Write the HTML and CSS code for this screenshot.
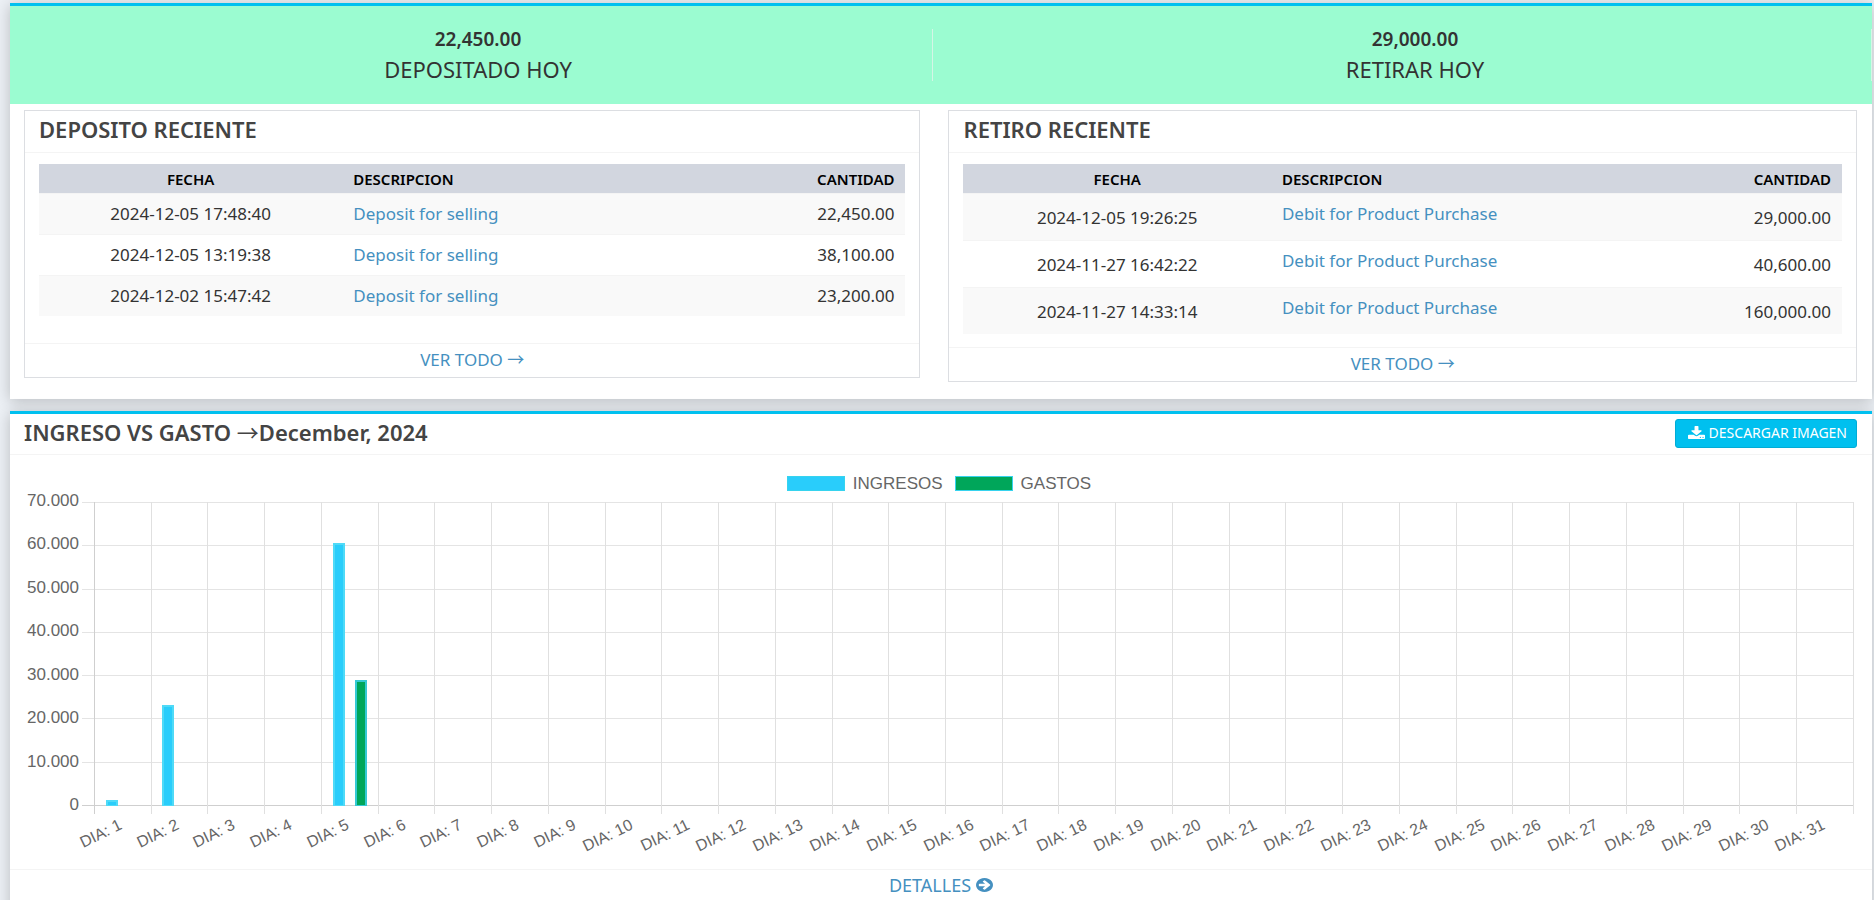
FILE: index.html
```html
<!DOCTYPE html>
<html lang="es">
<head>
<meta charset="utf-8">
<title>Panel</title>
<link rel="stylesheet" href="styles.css">
</head>
<body>
<main class="page">
  <section class="box">
    <div class="summary">
      <div class="summary-item"><strong class="summary-amount">22,450.00</strong><span class="summary-label">DEPOSITADO HOY</span></div>
      <div class="summary-item"><strong class="summary-amount">29,000.00</strong><span class="summary-label">RETIRAR HOY</span></div>
    </div>
    <div class="panels">
      <section class="panel">
        <h3 class="panel-title">DEPOSITO RECIENTE</h3>
        <div class="panel-body panel-body-tall">
          <table class="records">
            <thead><tr><th class="date">FECHA</th><th class="desc">DESCRIPCION</th><th class="amount">CANTIDAD</th></tr></thead>
            <tbody>
              <tr><td class="date">2024-12-05 17:48:40</td><td class="desc"><a href="#">Deposit for selling</a></td><td class="amount">22,450.00</td></tr>
              <tr><td class="date">2024-12-05 13:19:38</td><td class="desc"><a href="#">Deposit for selling</a></td><td class="amount">38,100.00</td></tr>
              <tr><td class="date">2024-12-02 15:47:42</td><td class="desc"><a href="#">Deposit for selling</a></td><td class="amount">23,200.00</td></tr>
            </tbody>
          </table>
        </div>
        <div class="panel-footer"><a href="#">VER TODO <span class="arrow">→</span></a></div>
      </section>
      <section class="panel">
        <h3 class="panel-title">RETIRO RECIENTE</h3>
        <div class="panel-body">
          <table class="records records-spaced">
            <thead><tr><th class="date">FECHA</th><th class="desc">DESCRIPCION</th><th class="amount">CANTIDAD</th></tr></thead>
            <tbody>
              <tr><td class="date">2024-12-05 19:26:25</td><td class="desc"><a href="#">Debit for Product Purchase</a></td><td class="amount">29,000.00</td></tr>
              <tr><td class="date">2024-11-27 16:42:22</td><td class="desc"><a href="#">Debit for Product Purchase</a></td><td class="amount">40,600.00</td></tr>
              <tr><td class="date">2024-11-27 14:33:14</td><td class="desc"><a href="#">Debit for Product Purchase</a></td><td class="amount">160,000.00</td></tr>
            </tbody>
          </table>
        </div>
        <div class="panel-footer"><a href="#">VER TODO <span class="arrow">→</span></a></div>
      </section>
    </div>
  </section>

  <section class="box">
    <header class="box-header">
      <h3 class="box-title">INGRESO VS GASTO <span class="arrow">→</span>December, 2024</h3>
      <button class="download" type="button">
        <svg class="download-icon" viewBox="0 0 1664 1536" preserveAspectRatio="none" aria-hidden="true"><path fill="currentColor" d="M1280 1216q0-26-19-45t-45-19-45 19-19 45 19 45 45 19 45-19 19-45zm256 0q0-26-19-45t-45-19-45 19-19 45 19 45 45 19 45-19 19-45zm128-224v320q0 40-28 68t-68 28H96q-40 0-68-28t-28-68V992q0-40 28-68t68-28h465l135 136q58 56 136 56t136-56l136-136h464q40 0 68 28t28 68zm-325-569q17 41-14 70l-448 448q-18 19-45 19t-45-19L339 493q-31-29-14-70 17-39 59-39h256V-64q0-26 19-45t45-19h256q26 0 45 19t19 45v448h256q42 0 59 39z" transform="translate(0 128)"/></svg>
        DESCARGAR IMAGEN
      </button>
    </header>
    <div class="chart">
      <div class="legend">
        <span class="legend-item"><i class="swatch income"></i>INGRESOS</span>
        <span class="legend-item"><i class="swatch expense"></i>GASTOS</span>
      </div>
      <div class="chart-area">
        <div class="y-axis" id="y-axis"></div>
        <div class="plot" id="plot"></div>
        <div class="x-axis" id="x-axis"></div>
      </div>
    </div>
    <footer class="box-footer"><a class="details" href="#">DETALLES
      <svg class="details-icon" viewBox="0 0 1536 1536" preserveAspectRatio="none" aria-hidden="true"><path fill="currentColor" d="M1285 768q0-27-18-45L905 361l-91-91q-18-18-45-18t-45 18l-91 91q-18 18-18 45t18 45l189 189H320q-26 0-45 19t-19 45v128q0 26 19 45t45 19h502l-189 189q-19 19-19 45t19 45l91 91q18 18 45 18t45-18l362-362 91-91q18-18 18-45zm251 0q0 209-103 385.500T1153.500 1433 768 1536t-385.500-103T103 1153.500 0 768t103-385.500T382.500 103 768 0t385.500 103T1433 382.500 1536 768z"/></svg></a></footer>
  </section>
</main>
<script src="chart.js"></script>
</body>
</html>
```
FILE: styles.css
```css
* { box-sizing: border-box; }
body {
  margin: 0;
  background: #ecf0f5;
  color: #333;
  font: 17px/20px "Noto Sans", sans-serif;
  overflow: hidden;
}
a { color: #4590c0; text-decoration: none; }
.page {
  display: flex;
  flex-direction: column;
  gap: 12px;
  padding: 3px 2px 0 10px;
}
.box {
  background: #fff;
  border-top: 3px solid #00c0ef;
  box-shadow: 0 2px 14px rgba(0, 0, 0, .22);
}
.summary {
  display: grid;
  grid-template-columns: 923fr 939fr;
  padding: 23px 0;
  background: #9bfcd1;
}
.summary-item {
  display: flex;
  flex-direction: column;
  align-items: center;
  height: 52px;
  padding-left: 14px;
  border-right: 1px solid #d5f5e6;
}
.summary-item:last-child { padding-left: 26px; }
.summary-amount { font-size: 19px; line-height: 20px; font-weight: 600; }
.summary-label { font-size: 22px; line-height: 30px; padding-top: 5px; }
.panels {
  display: grid;
  grid-template-columns: 896fr 908fr;
  gap: 28px;
  align-items: start;
  padding: 6px 15px 17px 14px;
}
.panel { border: 1px solid #dcdee2; }
.panel-title {
  margin: 0;
  padding: 4px 14px 9px;
  font-size: 22px;
  line-height: 28px;
  font-weight: 600;
  color: #444;
  border-bottom: 1px solid #f4f4f4;
}
.panel-body { padding: 11px 14px 13px; }
.panel-body-tall { padding-bottom: 27px; }
.records { width: 100%; border-collapse: collapse; table-layout: fixed; }
.records th {
  height: 29px;
  padding: 2px 11px 0;
  background: #d2d6df;
  color: #000;
  font-size: 15px;
  font-weight: 600;
}
.records td { height: 41px; padding: 0 11px; border-top: 1px solid #f4f4f4; }
.records tbody tr:nth-child(odd) { background: #f9f9f9; }
.records-spaced td { height: 47px; padding-top: 2px; }
.records-spaced td.desc { padding: 0 11px 6px; }
.records .date { width: 35%; text-align: center; }
.records .desc { text-align: left; }
.records .amount { width: 25%; text-align: right; }
.panel-footer {
  padding: 6px 0 7px;
  border-top: 1px solid #f4f4f4;
  text-align: center;
}
.arrow { font-family: "Noto Sans CJK JP", sans-serif; font-weight: 400; line-height: 1; }
.box-header {
  display: flex;
  align-items: center;
  justify-content: space-between;
  padding: 5px 15px 6px 14px;
  border-bottom: 1px solid #f4f4f4;
}
.box-title { margin: 0; padding-bottom: 3px; font-size: 22px; line-height: 26px; font-weight: 600; color: #444; }
.download {
  display: flex;
  align-items: center;
  gap: 4px;
  height: 29px;
  padding: 0 9px 2px 12px;
  border: 1px solid #00acd6;
  border-radius: 3px;
  background: #00c0ef;
  color: #fff;
  font: 14px/20px "Noto Sans", sans-serif;
}
.download-icon { width: 17px; height: 13px; }
.chart {
  padding: 21px 18px 0 14px;
  color: #666;
  font: 17px/16px "Liberation Sans", sans-serif;
}
.legend { display: flex; justify-content: center; gap: 12px; height: 26px; }
.legend-item { display: flex; gap: 8px; }
.swatch { width: 58px; height: 15px; border: 1px solid #36d3ee; }
.income { background: #29cdfb; }
.expense { background: #00a65a; }
.chart-area { display: grid; grid-template-columns: 58px 1fr; }
.y-axis {
  display: flex;
  flex-direction: column;
  justify-content: space-between;
  margin: -9px 3px -7px 0;
  text-align: right;
}
.plot {
  position: relative;
  display: flex;
  height: 304px;
  margin-left: 12px;
}
.gridlines {
  position: absolute;
  inset: 0 0 0 -12px;
  display: flex;
  flex-direction: column;
  justify-content: space-between;
}
.gridline { height: 1px; background: #e4e4e4; }
.gridline:last-child { background: #cfcfcf; }
.day {
  position: relative;
  flex: 1;
  margin-bottom: -8px;
  border-left: 1px solid #e0e0e0;
}
.gridlines + .day { border-left-color: #cfcfcf; }
.day:last-child { border-right: 1px solid #e0e0e0; }
.bars {
  position: absolute;
  inset: 0 20% 8px 19%;
  display: flex;
  align-items: flex-end;
  justify-content: space-between;
}
.bar { width: 12px; border: 2px solid #4fdaf7; border-bottom-width: 1px; }
.bar.expense { border-color: #35c9d4; }
.x-axis { grid-column: 2; display: flex; height: 63px; padding: 8px 0 0 12px; }
.tick { flex: 1; display: flex; justify-content: flex-end; font-size: 16px; }
.tick-label {
  margin-right: 38%;
  white-space: nowrap;
  transform: rotate(-26deg);
  transform-origin: right center;
}
.box-footer { padding: 5px 0 20px; border-top: 1px solid #f4f4f4; }
.details { display: flex; align-items: center; justify-content: center; gap: 5px; font-size: 18px; }
.details-icon { width: 17px; height: 14px; }
```
FILE: chart.js
```js
const MAX = 70000;
const STEP = 10000;
const DAYS = 31;
const income = { 1: 1400, 2: 23200, 5: 60550 };
const expense = { 5: 29000 };

const yAxis = document.getElementById('y-axis');
const plot = document.getElementById('plot');
const xAxis = document.getElementById('x-axis');

function add(parent, className, text) {
  const node = document.createElement('div');
  node.className = className;
  if (text !== undefined) node.textContent = text;
  parent.appendChild(node);
  return node;
}

const lines = add(plot, 'gridlines');
for (let value = MAX; value >= 0; value -= STEP) {
  add(yAxis, 'y-label', value ? value / 1000 + '.000' : '0');
  add(lines, 'gridline');
}

for (let day = 1; day <= DAYS; day++) {
  const bars = add(add(plot, 'day'), 'bars');
  if (income[day]) add(bars, 'bar income').style.height = income[day] / MAX * 100 + '%';
  if (expense[day]) add(bars, 'bar expense').style.height = expense[day] / MAX * 100 + '%';
  add(add(xAxis, 'tick'), 'tick-label', 'DIA: ' + day);
}
```
